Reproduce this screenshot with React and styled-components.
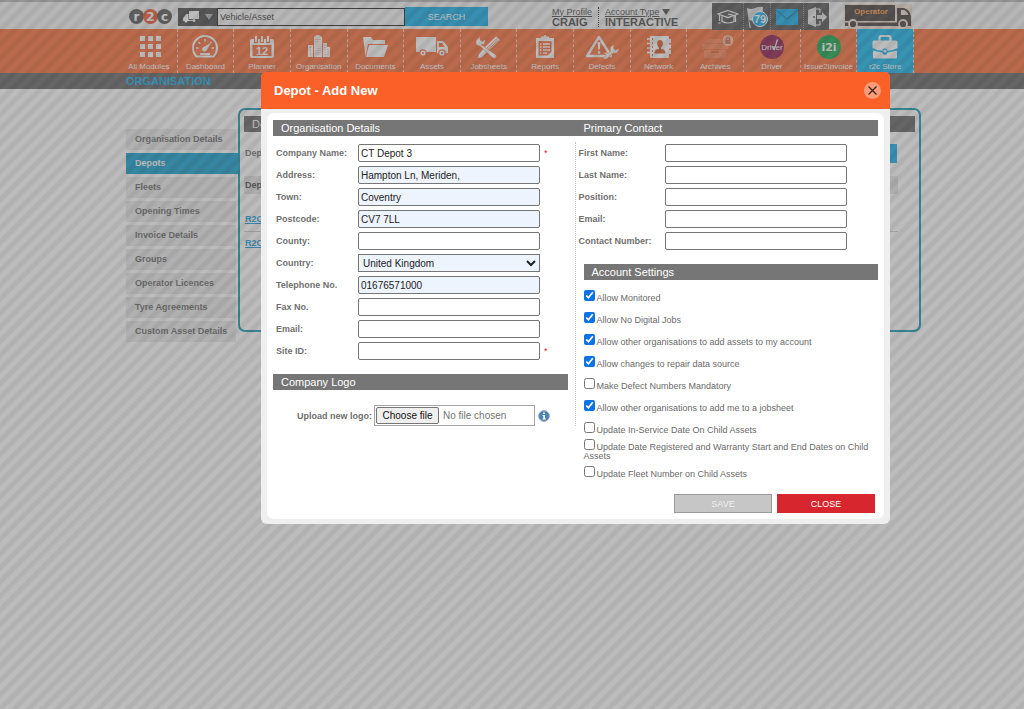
// src/App.jsx
import React from "react";
import styled, { createGlobalStyle, css } from "styled-components";

const GlobalStyle = createGlobalStyle`
  * {
    box-sizing: border-box;
  }

  body {
    margin: 0;
    background: #ffffff;
    font-family: "Liberation Sans", Arial, sans-serif;
    font-size: 9px;
    color: #6a6a6a;
  }

  button, input, select {
    font-family: inherit;
    margin: 0;
  }
`;

/* ---------- top bar ---------- */

const TopBar = styled.header`
  display: flex;
  align-items: center;
  height: 29px;
  padding: 2px 112px 0 129px;
  border-top: 2px solid #b4b4b4;
  background: #f4f4f4;
`;

const Logo = styled.div`
  display: flex;
  width: 43px;
  margin-right: 6px;
`;

const LogoLetter = styled.span`
  display: flex;
  align-items: center;
  justify-content: center;
  width: 15px;
  height: 15px;
  margin-right: -1px;
  border-radius: 50%;
  background: ${(props) => (props.$accent ? "#f04a20" : "#4c4c4c")};
  color: #ffffff;
  font: bold 12px/12px "DejaVu Sans", sans-serif;
`;

const VehicleButton = styled.button`
  display: flex;
  align-items: center;
  justify-content: center;
  gap: 5px;
  width: 39px;
  height: 18px;
  padding: 0;
  border: 0;
  background: #3c3c3c;
`;

const SearchInput = styled.input`
  width: 188px;
  height: 18px;
  padding: 0 2px;
  border: 1px solid #111111;
  border-radius: 0;
  background: #f6f6f6;
  color: #222222;
  font-size: 9px;

  &::placeholder {
    color: #222222;
    opacity: 1;
  }
`;

const SearchButton = styled.button`
  width: 83px;
  height: 19px;
  margin-right: 64px;
  padding: 0;
  border: 0;
  background: #00a8e8;
  color: #ffffff;
  font-size: 9px;
`;

const Account = styled.div`
  display: flex;
  flex-direction: column;
  align-items: flex-start;
  padding-right: ${(props) => (props.$divided ? "6px" : "0")};
  margin-right: ${(props) => (props.$divided ? "6px" : "0")};
  border-right: ${(props) => (props.$divided ? "1px dotted #222222" : "0")};
  color: #3c3c3c;
  line-height: 10px;
  white-space: nowrap;

  a {
    color: #3c3c3c;
    font-size: 9px;
  }

  strong {
    font-size: 11px;
  }
`;

const ToolStrip = styled.div`
  display: flex;
  height: 27px;
  margin-left: auto;
  margin-right: 15px;
  background: #474747;
`;

const ToolButton = styled.button`
  display: flex;
  align-items: center;
  justify-content: center;
  width: ${(props) => props.$width || 30}px;
  padding: 0;
  border: 0;
  border-right: 1px dotted #8a8a8a;
  background: none;

  &:last-child {
    border-right: 0;
  }
`;

/* ---------- module navigation ---------- */

const ModuleNav = styled.nav`
  display: flex;
  height: 44px;
  padding: 0 110px 0 121px;
  background: #fc6329;
`;

const ModuleLink = styled.a`
  display: flex;
  flex: 1;
  flex-direction: column;
  align-items: center;
  padding-top: 6px;
  border-right: 1px dashed #ffc5ae;
  background: ${(props) => (props.$active ? "#00b0ec" : "transparent")};
  color: #ffffff;
  font-size: 8px;
  line-height: 10px;
  text-decoration: none;
  white-space: nowrap;

  svg {
    display: block;
    margin-bottom: 3px;
  }
`;

const TitleBar = styled.div`
  height: 16px;
  padding-left: 126px;
  background: #585858;

  h1 {
    margin: 0;
    color: #00a8e8;
    font-size: 11px;
    line-height: 16px;
  }
`;

/* ---------- page behind the dialog ---------- */

const Page = styled.main`
  display: flex;
  align-items: flex-start;
  padding: 19px 103px 0 126px;
`;

const SideMenu = styled.nav`
  display: flex;
  flex-direction: column;
  gap: 3px;
  width: 112px;
  padding-top: 21px;
`;

const SideLink = styled.a`
  height: 21px;
  margin-right: 2px;
  padding-left: 9px;
  background: #e9e9e9;
  color: #5e5e5e;
  font-size: 9px;
  font-weight: bold;
  line-height: 21px;
  text-decoration: none;
  white-space: nowrap;

  ${(props) =>
    props.$active &&
    css`
      margin-right: 0;
      background: #0097cc;
      color: #ffffff;
    `}
`;

const Panel = styled.section`
  flex: 1;
  height: 224px;
  padding: 6px 4px;
  border: 2px solid #0093ac;
  border-radius: 7px;

  h2 {
    margin: 0;
    padding-left: 8px;
    background: #5a5a5a;
    color: #ffffff;
    font-size: 11px;
    font-weight: normal;
    line-height: 16px;
  }
`;

const PanelTools = styled.div`
  display: flex;
  align-items: center;
  justify-content: space-between;
  height: 42px;
  padding: 0 18px 0 1px;
  font-weight: bold;
`;

const AddButton = styled.button`
  width: 98px;
  height: 19px;
  border: 0;
  background: #00a8e8;
  color: #ffffff;
  font-size: 9px;
`;

const DepotTable = styled.table`
  width: calc(100% - 17px);
  margin-top: 2px;
  border-collapse: collapse;
  text-align: left;

  th {
    height: 18px;
    padding: 0 1px;
    background: #e2e2e2;
    color: #3c3c3c;
  }

  td {
    height: 23px;
    padding: 0 1px;
    border-bottom: 1px solid #c8c8c8;
  }

  tbody tr:first-child td {
    height: 37px;
    padding-top: 14px;
  }

  tbody tr:last-child td {
    border-bottom: 0;
  }

  a {
    color: #0097dc;
    font-weight: bold;
  }
`;

/* ---------- dialog ---------- */

const Overlay = styled.div`
  position: fixed;
  inset: 0;
  padding: 72px 134px 20px 261px;
  overflow: auto;
  background:
    repeating-linear-gradient(
      135deg,
      rgba(0, 0, 0, 0.06) 0,
      rgba(0, 0, 0, 0.06) 3px,
      transparent 5px,
      transparent 8px,
      rgba(0, 0, 0, 0.06) 10px
    ),
    rgba(116, 116, 116, 0.48);
`;

const Dialog = styled.div`
  padding: 0 6px 5px;
  border-radius: 6px;
  background: #efefef;
`;

const DialogHeader = styled.div`
  display: flex;
  align-items: center;
  justify-content: space-between;
  height: 37px;
  margin: 0 -6px 4px;
  padding: 0 9px 0 13px;
  border-radius: 5px 5px 0 0;
  background: #fa6028;

  h2 {
    margin: 0;
    color: #ffffff;
    font-size: 13px;
  }
`;

const RoundButton = styled.button`
  display: flex;
  align-items: center;
  justify-content: center;
  width: 17px;
  height: 17px;
  padding: 0;
  border: 0;
  border-radius: 50%;
  background: #fc9c78;
`;

const DialogBody = styled.form`
  padding: 7px 6px 6px;
  border-radius: 7px;
  background: #ffffff;
`;

const Columns = styled.div`
  display: grid;
  grid-template-columns: repeat(2, minmax(0, 1fr));
  align-items: start;
`;

const SectionTitle = styled.h3`
  margin: 0;
  padding-left: 8px;
  background: #767676;
  color: #ffffff;
  font-size: 11px;
  font-weight: normal;
  line-height: 16px;
`;

const LeftColumn = styled.div`
  margin-top: 6px;
  padding-right: 7px;
  border-right: 1px dotted #c4c4c4;
`;

const RightColumn = styled.div`
  padding-top: 6px;
`;

const Section = styled.section`
  margin-top: 12px;
  margin-left: ${(props) => (props.$inset ? "8px" : "0")};
`;

const FieldRow = styled.div`
  display: flex;
  align-items: center;
  height: 22px;
  padding-left: 3px;

  label {
    width: ${(props) => props.$labelWidth || 82}px;
    color: #707070;
    font-weight: bold;
  }
`;

const field = css`
  width: 182px;
  height: 18px;
  border: 1px solid #767676;
  background: ${(props) => (props.$filled ? "#edf4fd" : "#ffffff")};
  color: #222222;
`;

const TextInput = styled.input`
  ${field}
  padding: 0 2px;
  border-radius: 2px;
  font-size: 10px;
`;

const Select = styled.select`
  ${field}
  padding: 0;
  border-radius: 0;
  font-size: 10px;
`;

const Required = styled.span`
  margin-left: 4px;
  color: #d8262f;
`;

const UploadRow = styled.div`
  display: flex;
  align-items: center;
  height: 21px;
  margin-top: 15px;
  padding-left: 24px;

  > label {
    width: 77px;
    color: #707070;
    font-weight: bold;
    white-space: nowrap;
  }
`;

const FilePicker = styled.div`
  position: relative;
  display: flex;
  align-items: center;
  gap: 4px;
  width: 161px;
  height: 21px;
  margin-right: 3px;
  padding: 0 1px;
  border: 1px solid #a4a4a4;
  color: #757575;
  font-size: 10px;

  input {
    position: absolute;
    inset: 0;
    width: 100%;
    opacity: 0;
  }
`;

const FilePickerLabel = styled.span`
  width: 63px;
  height: 17px;
  border: 1px solid #767676;
  border-radius: 2px;
  background: #efefef;
  color: #111111;
  line-height: 15px;
  text-align: center;
`;

const Settings = styled.div`
  padding-top: 5px;
`;

const Setting = styled.label`
  display: flex;
  align-items: center;
  min-height: 22px;
  color: #6a6a6a;
  font-size: 9px;
  line-height: 9px;

  input {
    width: 11px;
    height: 11px;
    margin-right: 2px;
    accent-color: #0b72e8;
    vertical-align: baseline;
  }
`;

const Actions = styled.div`
  display: flex;
  justify-content: flex-end;
  gap: 5px;
  margin-top: 11px;
  padding-right: 3px;
`;

const ActionButton = styled.button`
  width: 98px;
  height: 19px;
  padding: 0;
  border: 1px solid ${(props) => (props.$primary ? "#d8262f" : "#9a9a9a")};
  background: ${(props) => (props.$primary ? "#d8262f" : "#c6c6c6")};
  color: ${(props) => (props.$primary ? "#ffffff" : "#f0f0f0")};
  font-size: 9px;
`;

/* ---------- icons ---------- */

const ModuleIcon = ({ children }) => (
  <svg width="36" height="24" viewBox="0 0 36 24" fill="#fff" aria-hidden="true">
    {children}
  </svg>
);

const wrench =
  "M9 1.5 L9 5 L11.5 6.5 L14 4.6 C15 7.8 13 10 10.2 9.6 L25 20 C26.5 22 24 24.5 22 23 L9 11 C6 11.2 4.3 8.5 5.2 5.6 Z";

const icons = {
  modules: [0, 8, 16].map((y) =>
    [9, 17, 25].map((x) => <rect key={`${x}-${y}`} x={x} y={y + 1} width="5" height="5" />)
  ),
  dashboard: (
    <>
      <path
        d="M9.5 21.5 A12 12 0 1 1 26.5 21.5 Z"
        fill="none"
        stroke="#fff"
        strokeWidth="2"
        strokeLinejoin="round"
      />
      <path
        d="M9 13 h2.5 M11.5 7 l1.8 1.8 M18 4 v2.5 M24.5 7 l-1 1 M27 13 h-2.5"
        stroke="#fff"
        strokeWidth="1.6"
      />
      <path d="M24.5 7.5 L19.8 15 A2.4 2.4 0 1 1 16.8 12 Z" />
      <rect x="13" y="18" width="10" height="2" />
    </>
  ),
  planner: (
    <>
      <path d="M8 4 h20 a2 2 0 0 1 2 2 v15 a2 2 0 0 1 -2 2 H8 a2 2 0 0 1 -2 -2 V6 a2 2 0 0 1 2 -2 Z M8.500 10 v11 h19 v-11 Z" fillRule="evenodd" />
      <path d="M12 0 v8 M18 0 v8 M24 0 v8" stroke="#fc6329" strokeWidth="4" />
      <path d="M12 1 v6 M18 1 v6 M24 1 v6" stroke="#fff" strokeWidth="2" />
      <text x="18" y="19.5" textAnchor="middle" fontSize="11" fontWeight="bold">
        12
      </text>
    </>
  ),
  organisation: (
    <>
      <path d="M7 10 h5 v12 H7 Z M13 2 l3 -2 h2 l3 2 v20 h-8 Z M22 8 h4 v4 h3 v10 h-7 Z" />
      <path
        d="M15 4 v16 M17 4 v16 M19 4 v16 M9.5 12 v8 M24 10 v10 M27 14 v6"
        stroke="#fc6329"
        strokeWidth=".7"
        strokeDasharray="1 1.2"
      />
    </>
  ),
  documents: (
    <>
      <path d="M6 2 h8 l2 3 h12 v4 H11 L8.5 21 Z" />
      <path d="M12 10 h19 l-4 12 H9 Z" />
    </>
  ),
  assets: (
    <>
      <path d="M2 2 h20 v15 H2 Z M23 6 h6 l5 6 v6 H23 Z M25 8 v4 h6 l-3 -4 Z" fillRule="evenodd" />
      <g stroke="#fc6329" strokeWidth="1.2">
        <circle cx="9" cy="18" r="3.2" />
        <circle cx="28" cy="18" r="3.2" />
      </g>
      <g fill="#fc6329">
        <circle cx="9" cy="18" r="1.1" />
        <circle cx="28" cy="18" r="1.1" />
      </g>
    </>
  ),
  jobsheets: (
    <>
      <path d="M25 1.500 l4 3.5 L17 16 l-6.5 6.500 l-3.5 .5 l.8 -3.5 L14 12 Z" />
      <path d="M26 3.5 L15 14 M27.500 5 L16 15.5" stroke="#fc6329" strokeWidth=".8" />
      <path d={wrench} stroke="#fc6329" strokeWidth=".5" />
    </>
  ),
  reports: (
    <>
      <path d="M9 3 h18 v20 H9 Z M11.5 6 v14.500 h9 l4 -3.500 V6 Z" fillRule="evenodd" />
      <path d="M14 1.500 h2.500 a1.500 1.500 0 0 1 3 0 H22 v4 h-8 Z" />
      <path d="M13 9 h1.500 M16 9 h7 M13 12 h1.500 M16 12 h7 M13 15 h1.500 M16 15 h7 M13 18 h1.500 M16 18 h4" stroke="#fff" strokeWidth="1.300" />
    </>
  ),
  defects: (
    <>
      <path
        d="M15 2 L27 21 H3 Z"
        fill="none"
        stroke="#fff"
        strokeWidth="2.4"
        strokeLinejoin="round"
      />
      <path d="M13.600 7 h2.800 l-.6 7.500 h-1.600 Z" />
      <circle cx="15" cy="17.500" r="1.400" />
      <path
        d="M30 10 l-.5 3.500 l2 1.500 l3.500 -1.500 c.3 3.500 -2.500 5.500 -5.500 4.500 L24.500 22 c-.5 2.500 -4.500 3 -6 .5 l3 -.5 l.5 -2.500 l-2.500 -1.500 c2 -1.200 4 -.3 4.500 .7 l2.500 -2.500 c-1 -3.500 .5 -6 3.500 -6.200 Z"
        stroke="#fc6329"
        strokeWidth=".6"
      />
    </>
  ),
  network: (
    <>
      <rect x="9" y="1" width="19" height="22" rx="1" />
      <path d="M6 4 h5 M6 8.500 h5 M6 13 h5 M6 17.500 h5" stroke="#fff" strokeWidth="1.600" />
      <path d="M11.500 3 v19" stroke="#fc6329" strokeDasharray="2 2" />
      <path
        d="M13.500 18.500 c0 -4 2 -4 4.500 -4.500 v-1.500 c-3 -2.500 -2.500 -7.500 1 -7.500 s4 5 1 7.500 V14 c2.500 .5 4.500 .5 4.500 4.500 Z"
        fill="#d84a18"
      />
      <path d="M28 4 h2 v4 h-2 Z M28 9.500 h2 v4 h-2 Z M28 15 h2 v4 h-2 Z" />
    </>
  ),
  archives: (
    <>
      <g opacity=".16">
        <path d="M9 8 l3 -4 h12 l3 4 Z M5 9 h26 v5 H5 Z M7 15 h22 v8 H7 Z" />
        <rect x="14" y="16" width="8" height="2" fill="#b03000" />
      </g>
      <circle cx="31" cy="5.500" r="5.500" fill="#ffc9b4" opacity=".8" />
      <rect x="28.500" y="5" width="5" height="4" fill="#d06038" />
      <path d="M29.500 5 V4 a1.500 1.500 0 0 1 3 0 V5" fill="none" stroke="#d06038" />
    </>
  ),
  driver: (
    <>
      <circle cx="18" cy="12" r="12" fill="#86083f" />
      <text x="18" y="15" textAnchor="middle" fontSize="8">
        Driver
      </text>
      <path d="M18.500 11 l1.800 3.500 L23.500 4.500" fill="none" stroke="#fff" strokeWidth="1.200" />
    </>
  ),
  invoice: (
    <>
      <circle cx="18" cy="12" r="12" fill="#00a03c" />
      <text
        x="18"
        y="16"
        textAnchor="middle"
        fontSize="11"
        fontWeight="bold"
        fontFamily="DejaVu Sans, sans-serif"
      >
        i2i
      </text>
    </>
  ),
  store: (
    <>
      <path
        d="M12.500 6 V3 a2 2 0 0 1 2 -2 h7 a2 2 0 0 1 2 2 V6"
        fill="none"
        stroke="#fff"
        strokeWidth="2.200"
      />
      <path d="M7 5.500 h22 a1.500 1.500 0 0 1 1.500 1.500 v6 q-5 2.500 -10 2.700 a2.500 2.500 0 0 0 -5 0 q-5 -.2 -10 -2.700 V7 a1.500 1.500 0 0 1 1.500 -1.500 Z" />
      <path d="M6 15.500 q5 1.800 9.500 1.900 a2.500 2.500 0 0 0 5 0 q4.500 -.1 9.500 -1.900 V22 a1.500 1.500 0 0 1 -1.500 1.500 h-21 A1.500 1.500 0 0 1 6 22 Z" />
      <circle cx="18" cy="16" r="1.600" />
    </>
  ),
};

const VehicleIcon = () => (
  <svg width="17" height="12" viewBox="0 0 17 12" fill="#fff" aria-hidden="true">
    <path d="M6 0 h10 v8 H6 Z M1 6 l2 -3 h2.500 v6 H10 v1 H0 V7 Z" />
    <circle cx="3" cy="10" r="1.500" />
    <circle cx="11" cy="9.500" r="1.500" />
  </svg>
);

const DownArrow = ({ color, size = 8 }) => (
  <svg width={size} height="6" viewBox="0 0 8 6" aria-hidden="true">
    <path d="M0 0 h8 L4 6 Z" fill={color} />
  </svg>
);

const CapIcon = () => (
  <svg width="22" height="16" viewBox="0 0 22 16" fill="none" stroke="#fff" strokeWidth="1.200" aria-hidden="true">
    <path d="M11 1.500 L21 5 L11 8.500 L1 5 Z" />
    <path d="M5 7 v5.500 q6 3 12 0 V7 M2.500 6 v6 M1.500 14 h2 M11 5 l7.500 2 v6" />
  </svg>
);

const FlagIcon = () => (
  <svg width="24" height="24" viewBox="0 0 24 24" aria-hidden="true">
    <path d="M2 3 q4 2 8 0 t8 -1 l-1 12 q-4 0 -7 1 t-6 0 l2 8 h-1.500 Z" fill="#e2e2e2" />
    <circle cx="15" cy="14" r="7.500" fill="#00a8e8" stroke="#fff" />
    <text x="15" y="18" textAnchor="middle" fontSize="11" fontWeight="bold" fill="#fff">
      79
    </text>
  </svg>
);

const MailIcon = () => (
  <svg width="22" height="17" viewBox="0 0 22 17" aria-hidden="true">
    <rect y="1" width="22" height="16" fill="#00a8e8" />
    <path d="M0 2 L11 11 L22 2" fill="none" stroke="#0078a8" strokeWidth="1.200" />
  </svg>
);

const ExitIcon = () => (
  <svg width="20" height="20" viewBox="0 0 20 20" aria-hidden="true">
    <path d="M9 2 h4 v4 M13 14 v4 H9" fill="none" stroke="#fff" />
    <path d="M1 3 L9 0 V20 L1 17 Z M10 8 h5 V5 l5 5 l-5 5 v-3 h-5 Z" fill="#e8e8e8" />
    <circle cx="7" cy="10" r="1" fill="#474747" />
  </svg>
);

const OperatorTruck = () => (
  <svg width="68" height="25" viewBox="0 0 68 25" role="img" aria-label="Operator">
    <rect width="68" height="25" fill="#f4dfcf" />
    <path d="M1 1 h50 v16 H1 Z M1 18.500 h52 V4 h7 q5 1 7 8 v10 H1 Z" fill="#3a3030" />
    <path d="M57 6 h3 q3 1 4.500 5 H57 Z" fill="#f4dfcf" />
    <text x="27" y="10" textAnchor="middle" fontSize="8" fontWeight="bold" fill="#ff9838">
      Operator
    </text>
    <g fill="#3a3030" stroke="#f4dfcf" strokeWidth="1.800">
      <circle cx="9" cy="20" r="4" />
      <circle cx="59" cy="20" r="4" />
    </g>
  </svg>
);

const InfoIcon = () => (
  <svg width="12" height="12" viewBox="0 0 12 12" role="img" aria-label="Logo information">
    <circle cx="6" cy="6" r="5.300" fill="#4584bd" stroke="#8a9fb4" />
    <path d="M5 2.500 h2 v1.500 H5 Z M4.500 5 H7 v3.500 h1 v1 H4.500 v-1 h.8 V6 h-.8 Z" fill="#fff" />
  </svg>
);

/* ---------- data ---------- */

const modules = [
  ["modules", "All Modules"],
  ["dashboard", "Dashboard"],
  ["planner", "Planner"],
  ["organisation", "Organisation"],
  ["documents", "Documents"],
  ["assets", "Assets"],
  ["jobsheets", "Jobsheets"],
  ["reports", "Reports"],
  ["defects", "Defects"],
  ["network", "Network"],
  ["archives", "Archives"],
  ["driver", "Driver"],
  ["invoice", "Issue2Invoice"],
  ["store", "r2c Store"],
];

const sideLinks = [
  "Organisation Details",
  "Depots",
  "Fleets",
  "Opening Times",
  "Invoice Details",
  "Groups",
  "Operator Licences",
  "Tyre Agreements",
  "Custom Asset Details",
];

const organisationFields = [
  { id: "company", label: "Company Name:", value: "CT Depot 3", required: true },
  { id: "address", label: "Address:", value: "Hampton Ln, Meriden,", filled: true },
  { id: "town", label: "Town:", value: "Coventry", filled: true },
  { id: "postcode", label: "Postcode:", value: "CV7 7LL", filled: true },
  { id: "county", label: "County:" },
  { id: "country", label: "Country:", options: ["United Kingdom"], filled: true },
  { id: "telephone", label: "Telephone No.", value: "01676571000", filled: true },
  { id: "fax", label: "Fax No." },
  { id: "email", label: "Email:" },
  { id: "site", label: "Site ID:", required: true },
];

const contactFields = [
  { id: "firstName", label: "First Name:" },
  { id: "lastName", label: "Last Name:" },
  { id: "position", label: "Position:" },
  { id: "contactEmail", label: "Email:" },
  { id: "contactNumber", label: "Contact Number:" },
];

const settings = [
  ["Allow Monitored", true],
  ["Allow No Digital Jobs", true],
  ["Allow other organisations to add assets to my account", true],
  ["Allow changes to repair data source", true],
  ["Make Defect Numbers Mandatory", false],
  ["Allow other organisations to add me to a jobsheet", true],
  ["Update In-Service Date On Child Assets", false],
  ["Update Date Registered and Warranty Start and End Dates on Child Assets", false],
  ["Update Fleet Number on Child Assets", false],
];

function Field({ id, label, value, options, filled, required, labelWidth }) {
  return (
    <FieldRow $labelWidth={labelWidth}>
      <label htmlFor={id}>{label}</label>
      {options ? (
        <Select id={id} $filled={filled}>
          {options.map((option) => (
            <option key={option}>{option}</option>
          ))}
        </Select>
      ) : (
        <TextInput id={id} type="text" defaultValue={value} $filled={filled} />
      )}
      {required && <Required>*</Required>}
    </FieldRow>
  );
}

function Header() {
  return (
    <>
      <TopBar>
        <Logo>
          <LogoLetter>r</LogoLetter>
          <LogoLetter $accent>2</LogoLetter>
          <LogoLetter>c</LogoLetter>
        </Logo>
        <VehicleButton type="button" aria-label="Search type">
          <VehicleIcon />
          <DownArrow color="#b0b0b0" />
        </VehicleButton>
        <SearchInput type="text" placeholder="Vehicle/Asset" aria-label="Vehicle/Asset" />
        <SearchButton type="button">SEARCH</SearchButton>
        <Account $divided>
          <a href="#profile">My Profile</a>
          <strong>CRAIG</strong>
        </Account>
        <Account>
          <span>
            <a href="#account">Account Type</a> <DownArrow color="#3c3c3c" />
          </span>
          <strong>INTERACTIVE</strong>
        </Account>
        <ToolStrip>
          <ToolButton type="button" aria-label="Training" $width={32}>
            <CapIcon />
          </ToolButton>
          <ToolButton type="button" aria-label="Alerts" $width={27}>
            <FlagIcon />
          </ToolButton>
          <ToolButton type="button" aria-label="Messages" $width={33}>
            <MailIcon />
          </ToolButton>
          <ToolButton type="button" aria-label="Log out" $width={25}>
            <ExitIcon />
          </ToolButton>
        </ToolStrip>
        <OperatorTruck />
      </TopBar>
      <ModuleNav>
        {modules.map(([key, label]) => (
          <ModuleLink key={key} href={`#${key}`} $active={key === "store"}>
            <ModuleIcon>{icons[key]}</ModuleIcon>
            {label}
          </ModuleLink>
        ))}
      </ModuleNav>
      <TitleBar>
        <h1>ORGANISATION</h1>
      </TitleBar>
    </>
  );
}

function DepotsPage() {
  return (
    <Page>
      <SideMenu>
        {sideLinks.map((label) => (
          <SideLink key={label} href="#" $active={label === "Depots"}>
            {label}
          </SideLink>
        ))}
      </SideMenu>
      <Panel>
        <h2>Dep</h2>
        <PanelTools>
          <span>Dep</span>
          <AddButton type="button" aria-label="Add depot" />
        </PanelTools>
        <DepotTable>
          <thead>
            <tr>
              <th>Dep</th>
            </tr>
          </thead>
          <tbody>
            <tr>
              <td>
                <a href="#depot-1">R2C</a>
              </td>
            </tr>
            <tr>
              <td>
                <a href="#depot-2">R2C</a>
              </td>
            </tr>
          </tbody>
        </DepotTable>
      </Panel>
    </Page>
  );
}

function DepotDialog() {
  return (
    <Overlay>
      <Dialog role="dialog" aria-labelledby="dialog-title">
        <DialogHeader>
          <h2 id="dialog-title">Depot - Add New</h2>
          <RoundButton type="button" aria-label="Close dialog">
            <svg width="9" height="9" viewBox="0 0 9 9" stroke="#3a2018" strokeWidth="1.200">
              <path d="M.5 .5 L8.500 8.500 M8.500 .5 L.5 8.500" />
            </svg>
          </RoundButton>
        </DialogHeader>
        <DialogBody>
          <Columns>
            <SectionTitle>Organisation Details</SectionTitle>
            <SectionTitle>Primary Contact</SectionTitle>
            <LeftColumn>
              {organisationFields.map((item) => (
                <Field key={item.id} {...item} />
              ))}
              <Section>
                <SectionTitle>Company Logo</SectionTitle>
                <UploadRow>
                  <label htmlFor="logo">Upload new logo:</label>
                  <FilePicker>
                    <FilePickerLabel>Choose file</FilePickerLabel>
                    <span>No file chosen</span>
                    <input id="logo" type="file" />
                  </FilePicker>
                  <InfoIcon />
                </UploadRow>
              </Section>
            </LeftColumn>
            <RightColumn>
              {contactFields.map((item) => (
                <Field key={item.id} {...item} labelWidth={86} />
              ))}
              <Section $inset>
                <SectionTitle>Account Settings</SectionTitle>
                <Settings>
                  {settings.map(([label, checked]) => (
                    <Setting key={label}>
                      <span>
                        <input type="checkbox" defaultChecked={checked} />
                        {label}
                      </span>
                    </Setting>
                  ))}
                </Settings>
              </Section>
            </RightColumn>
          </Columns>
          <Actions>
            <ActionButton type="button">SAVE</ActionButton>
            <ActionButton type="button" $primary>
              CLOSE
            </ActionButton>
          </Actions>
        </DialogBody>
      </Dialog>
    </Overlay>
  );
}

export default function App() {
  return (
    <>
      <GlobalStyle />
      <Header />
      <DepotsPage />
      <DepotDialog />
    </>
  );
}
